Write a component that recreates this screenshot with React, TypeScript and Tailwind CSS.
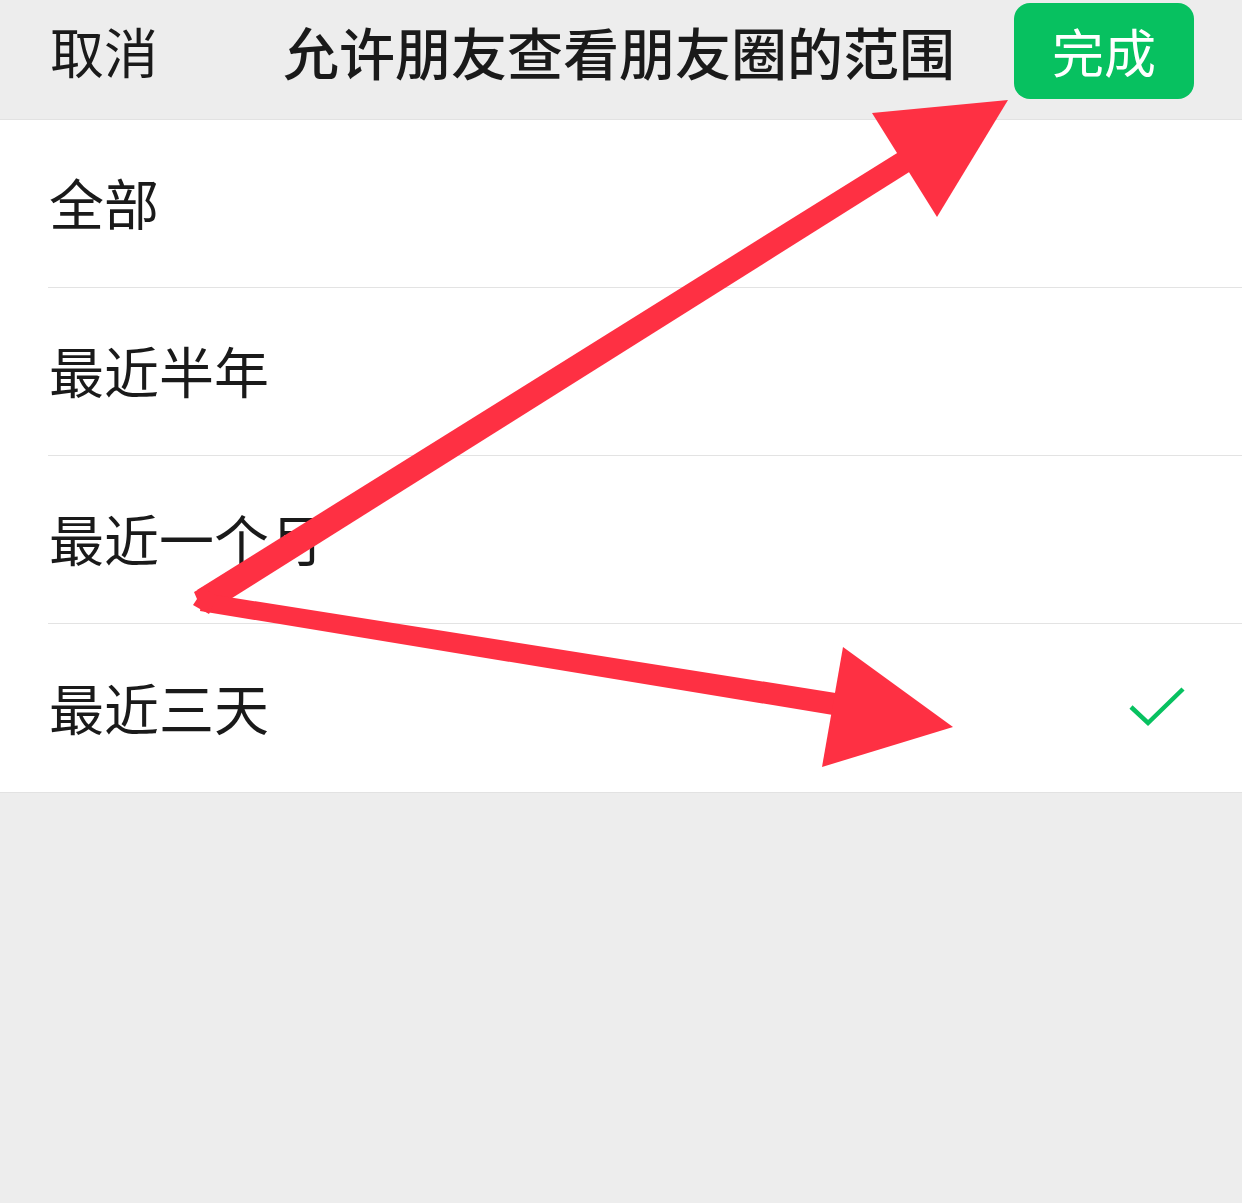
import React from 'react';

const options = ['全部', '最近半年', '最近一个月', '最近三天'];

const font = { fontFamily: '"Noto Sans CJK SC", "Noto Sans", sans-serif' };

export default function App() {
  const selected = 3;

  return (
    <div className="relative w-[1242px] h-[1203px] bg-[#ededed] overflow-hidden" style={font}>
      {/* Header */}
      <div className="relative h-[119px] flex items-start">
        <span className="absolute left-[50px] top-[18px] text-[54px] leading-[66px] text-[#1a1a1a]">取消</span>
        <span className="absolute left-0 right-0 top-[18px] text-center pr-[4px] text-[56px] leading-[66px] font-medium text-[#1a1a1a]">
          允许朋友查看朋友圈的范围
        </span>
        <button className="absolute left-[1014px] top-[3px] w-[180px] h-[96px] rounded-[16px] bg-[#07c160] text-white text-[52px] leading-none">
          完成
        </button>
      </div>

      {/* Options */}
      <div className="bg-white border-t border-b border-[#e2e2e2]">
        {options.map((label, i) => (
          <div key={label} className="pl-[48px]">
            <div
              className={`h-[168px] flex items-center pr-[54px] ${i < options.length - 1 ? 'border-b border-[#e3e3e3]' : ''}`}
            >
              <span className="flex-1 text-[55px] leading-none text-[#1a1a1a] pl-[1px] mb-[4px]">{label}</span>
              {i === selected && (
                <svg width="60" height="44" viewBox="0 0 60 44" className="mt-[2px]">
                  <path d="M3 20 L20 36 L55 2" fill="none" stroke="#07c160" strokeWidth="4.5" />
                </svg>
              )}
            </div>
          </div>
        ))}
      </div>

      {/* Annotation arrows */}
      <svg className="absolute left-0 top-0 pointer-events-none" width="1242" height="1203">
        <g fill="#fe3043" stroke="none">
          <polygon points="197,590 910,145 922,164 213,610" />
          <polygon points="872,113 1008,100 937,217" />
          <polygon points="203,593 842,694 839,716 200,611" />
          <polygon points="843,647 953,727 822,767" />
          <polygon points="194,592 203,587 210,592 218,596 214,604 209,614 200,609 193,605 197,599" />
        </g>
      </svg>
    </div>
  );
}
